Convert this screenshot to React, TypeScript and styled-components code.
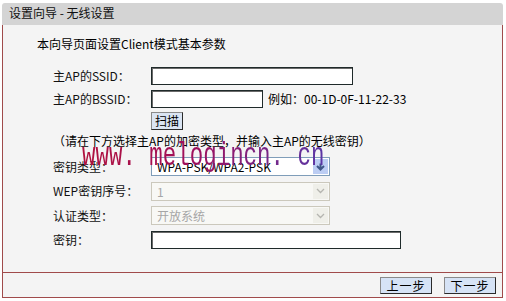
import React from "react";
import styled, { createGlobalStyle } from "styled-components";

const GlobalStyle = createGlobalStyle`
  html, body {
    margin: 0;
    padding: 0;
    background: #ffffff;
  }
  body {
    font-family: "Noto Sans CJK SC", "Liberation Sans", sans-serif;
    font-size: 12px;
    color: #000;
  }
`;

const Wrapper = styled.div`
  width: 501px;
  padding: 3px 0 0 2px;
`;

const Header = styled.div`
  height: 22px;
  line-height: 20px;
  padding-left: 7px;
  background: #d4d4d4;
  border-radius: 3px 3px 0 0;
  font-size: 12px;
  color: #111;
`;

const Panel = styled.div`
  position: relative;
  background: #f4f4f4;
  border-left: 1px solid #a04b4b;
  border-right: 1px solid #a04b4b;
  border-bottom: 1px solid #a04b4b;
  padding: 10px 0 22px 34px;
`;

const Title = styled.div`
  height: 18px;
  line-height: 18px;
`;

const Form = styled.div`
  display: grid;
  grid-template-columns: 98px 1fr;
  grid-template-rows: 23px 24px 19px 22px 29px 20px 29px 20px;
  margin: 11px 0 0 16px;
`;

const Label = styled.div`
  display: flex;
  align-items: center;
  color: #111;
  line-height: 14px;
`;

const Cell = styled.div`
  display: flex;
  align-items: center;
  gap: 5px;
`;

const Hint = styled.div`
  grid-column: 1 / -1;
  display: flex;
  align-items: center;
  line-height: 14px;
`;

const TextInput = styled.div<{ w: number }>`
  box-sizing: border-box;
  width: ${({ w }) => w}px;
  height: 18px;
  background: #fff;
  border: 1px solid #1f2a2a;
  box-shadow: inset 1px 1px 0 #6a6a6a;
`;

const SmallButton = styled.button`
  box-sizing: border-box;
  height: 18px;
  padding: 0 3px;
  background: #dbe5f3;
  border: 1px solid #2a2a2a;
  border-top-color: #8a8a8a;
  border-left-color: #8a8a8a;
  font-family: inherit;
  font-size: 12px;
  line-height: 14px;
  color: #000;
`;

const Example = styled.span`
  line-height: 14px;
`;

const SelectBox = styled.div<{ disabled?: boolean }>`
  box-sizing: border-box;
  display: flex;
  align-items: stretch;
  width: 179px;
  height: 19px;
  background: ${({ disabled }) => (disabled ? "#f8f8f5" : "#ffffff")};
  border: 1px solid ${({ disabled }) => (disabled ? "#cbc8bc" : "#7f9db9")};
`;

const SelectValue = styled.span<{ disabled?: boolean }>`
  flex: 1;
  padding-left: 5px;
  line-height: 17px;
  color: ${({ disabled }) => (disabled ? "#a6a6a6" : "#000")};
`;

const ArrowBox = styled.span<{ disabled?: boolean }>`
  display: flex;
  align-items: center;
  justify-content: center;
  width: 15px;
  margin: 1px;
  background: ${({ disabled }) => (disabled ? "#efefe9" : "#bccdf3")};
`;

const Watermark = styled.div`
  position: absolute;
  left: 79px;
  top: 114px;
  font-family: "Liberation Mono", monospace;
  font-size: 34px;
  line-height: 34px;
  white-space: pre;
  transform: scaleX(0.66);
  transform-origin: left center;
  background: linear-gradient(90deg, #b0123e 0%, #a0105c 45%, #5a36a6 100%);
  -webkit-background-clip: text;
  background-clip: text;
  color: transparent;
  pointer-events: none;
`;

const Footer = styled.div`
  display: flex;
  justify-content: flex-end;
  gap: 12px;
  height: 25px;
  padding: 4px 6px 0 0;
  box-sizing: border-box;
  background: #f4f4f4;
  border-left: 1px solid #a04b4b;
  border-right: 1px solid #a04b4b;
  border-bottom: 1px solid #a04b4b;
`;

const StepButton = styled(SmallButton)`
  width: 52px;
  height: 17px;
  background: #d6e3f6;
  letter-spacing: 1px;
`;

function Chevron({ disabled }: { disabled?: boolean }) {
  return (
    <svg width="11" height="8" viewBox="0 0 11 8">
      <path
        d={disabled ? "M2 2 L5.5 5.5 L9 2" : "M5.5 0.5 V6 M2 3 L5.5 6.5 L9 3"}
        fill="none"
        stroke={disabled ? "#b5b5b0" : "#3f5687"}
        strokeWidth={disabled ? 1.3 : 2}
      />
    </svg>
  );
}

function Select({ value, disabled }: { value: string; disabled?: boolean }) {
  return (
    <SelectBox disabled={disabled}>
      <SelectValue disabled={disabled}>{value}</SelectValue>
      <ArrowBox disabled={disabled}>
        <Chevron disabled={disabled} />
      </ArrowBox>
    </SelectBox>
  );
}

export default function App() {
  return (
    <>
      <GlobalStyle />
      <Wrapper>
        <Header>设置向导 - 无线设置</Header>
        <Panel>
          <Title>本向导页面设置Client模式基本参数</Title>
          <Form>
            <Label>主AP的SSID：</Label>
            <Cell>
              <TextInput w={202} />
            </Cell>
            <Label>主AP的BSSID：</Label>
            <Cell>
              <TextInput w={112} />
              <Example>例如：00-1D-0F-11-22-33</Example>
            </Cell>
            <div />
            <Cell>
              <SmallButton>扫描</SmallButton>
            </Cell>
            <Hint>（请在下方选择主AP的加密类型，并输入主AP的无线密钥）</Hint>
            <Label>密钥类型：</Label>
            <Cell>
              <Select value="WPA-PSK/WPA2-PSK" />
            </Cell>
            <Label>WEP密钥序号：</Label>
            <Cell>
              <Select value="1" disabled />
            </Cell>
            <Label>认证类型：</Label>
            <Cell>
              <Select value="开放系统" disabled />
            </Cell>
            <Label>密钥：</Label>
            <Cell>
              <TextInput w={250} />
            </Cell>
          </Form>
          <Watermark>www. melogincn. cn</Watermark>
        </Panel>
        <Footer>
          <StepButton>上一步</StepButton>
          <StepButton>下一步</StepButton>
        </Footer>
      </Wrapper>
    </>
  );
}
